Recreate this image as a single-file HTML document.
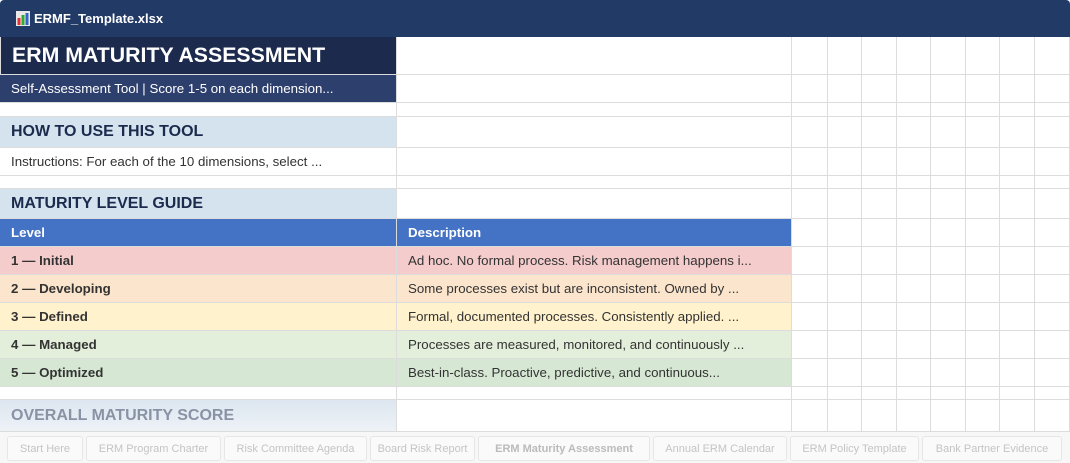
<!DOCTYPE html>
<html><head><style>
*{margin:0;padding:0;box-sizing:border-box}
body{width:1070px;height:463px;overflow:hidden;background:#fff;font-family:"Liberation Sans",Arial,sans-serif;position:relative}
.bar{position:absolute;left:0;top:0;width:1070px;height:37px;background:#223a66;border-radius:4px 4px 0 0}
.bar .t{position:absolute;left:34px;top:11px;color:#fff;font-weight:bold;font-size:13px}
.c{position:absolute;border-right:1px solid #dcdcdc;border-bottom:1px solid #dcdcdc;font-size:13.3px;color:#333;padding-left:11px;display:flex;align-items:center;white-space:nowrap;overflow:hidden}
.h{font-weight:bold;font-size:16px;color:#1c2a4d;background:#d5e3ee}
.tabs{position:absolute;left:0;top:432px;width:1070px;height:31px;background:#f7f7f7}
.tab{position:absolute;top:4px;height:25px;border:1px solid #e6e6e6;background:#fafafa;color:#c4c4c4;font-size:11px;display:flex;align-items:center;justify-content:center;border-radius:3px}
</style></head><body>
<div class="bar">
<svg style="position:absolute;left:16px;top:11px" width="14" height="15" viewBox="0 0 14 15"><rect x="0" y="0" width="14" height="15" fill="#e8e8e8"/><rect x="1.5" y="7" width="3" height="7" fill="#d33"/><rect x="5.5" y="4" width="3" height="10" fill="#3a3"/><rect x="9.5" y="2" width="3" height="12" fill="#36c"/></svg>
<div class="t">ERMF_Template.xlsx</div></div>
<div id="g"></div>
<script>
var rows=[[37,75],[75,103],[103,117],[117,148],[148,176],[176,189],[189,219],[219,247],[247,275],[275,303],[303,331],[331,359],[359,387],[387,400],[400,432]];
var cols=[792,828,862,897,931,966,1000,1035];
var h='';
rows.forEach(function(r){cols.forEach(function(x,i){var w=(i<cols.length-1?cols[i+1]:1070)-x;h+='<div class="c" style="left:'+x+'px;top:'+r[0]+'px;width:'+w+'px;height:'+(r[1]-r[0])+'px"></div>';});});
document.getElementById('g').innerHTML=h;
</script>
<div class="c" style="left:0;top:37px;width:397px;height:38px;background:#1c2a4d;color:#fff;font-weight:bold;font-size:21.3px;border-left:1px solid #dcdcdc">ERM MATURITY ASSESSMENT</div>
<div class="c" style="left:397px;top:37px;width:395px;height:38px"></div>
<div class="c" style="left:0;top:75px;width:397px;height:28px;background:#2d3f6c;color:#fff">Self-Assessment Tool | Score 1-5 on each dimension...</div>
<div class="c" style="left:397px;top:75px;width:395px;height:28px"></div>
<div class="c" style="left:0;top:103px;width:397px;height:14px"></div>
<div class="c" style="left:397px;top:103px;width:395px;height:14px"></div>
<div class="c h" style="left:0;top:117px;width:397px;height:31px">HOW TO USE THIS TOOL</div>
<div class="c" style="left:397px;top:117px;width:395px;height:31px"></div>
<div class="c" style="left:0;top:148px;width:397px;height:28px">Instructions: For each of the 10 dimensions, select ...</div>
<div class="c" style="left:397px;top:148px;width:395px;height:28px"></div>
<div class="c" style="left:0;top:176px;width:397px;height:13px"></div>
<div class="c" style="left:397px;top:176px;width:395px;height:13px"></div>
<div class="c h" style="left:0;top:189px;width:397px;height:30px">MATURITY LEVEL GUIDE</div>
<div class="c" style="left:397px;top:189px;width:395px;height:30px"></div>
<div class="c" style="left:0;top:219px;width:397px;height:28px;background:#4472c4;color:#fff;font-weight:bold">Level</div>
<div class="c" style="left:397px;top:219px;width:395px;height:28px;background:#4472c4;color:#fff;font-weight:bold">Description</div>
<div class="c" style="left:0;top:247px;width:397px;height:28px;background:#f4cccc;font-weight:bold">1 — Initial</div>
<div class="c" style="left:397px;top:247px;width:395px;height:28px;background:#f4cccc">Ad hoc. No formal process. Risk management happens i...</div>
<div class="c" style="left:0;top:275px;width:397px;height:28px;background:#fce5cd;font-weight:bold">2 — Developing</div>
<div class="c" style="left:397px;top:275px;width:395px;height:28px;background:#fce5cd">Some processes exist but are inconsistent. Owned by ...</div>
<div class="c" style="left:0;top:303px;width:397px;height:28px;background:#fff2cc;font-weight:bold">3 — Defined</div>
<div class="c" style="left:397px;top:303px;width:395px;height:28px;background:#fff2cc">Formal, documented processes. Consistently applied. ...</div>
<div class="c" style="left:0;top:331px;width:397px;height:28px;background:#e3efda;font-weight:bold">4 — Managed</div>
<div class="c" style="left:397px;top:331px;width:395px;height:28px;background:#e3efda">Processes are measured, monitored, and continuously ...</div>
<div class="c" style="left:0;top:359px;width:397px;height:28px;background:#d6e8d4;font-weight:bold">5 — Optimized</div>
<div class="c" style="left:397px;top:359px;width:395px;height:28px;background:#d6e8d4">Best-in-class. Proactive, predictive, and continuous...</div>
<div class="c" style="left:0;top:387px;width:397px;height:13px"></div>
<div class="c" style="left:397px;top:387px;width:395px;height:13px"></div>
<div class="c h" style="left:0;top:400px;width:397px;height:32px;background:linear-gradient(#dce6f0,#eef2f7);color:#8a93a6">OVERALL MATURITY SCORE</div>
<div class="c" style="left:397px;top:400px;width:395px;height:32px"></div>
<div class="tabs">
<div class="tab" style="left:7px;width:76px">Start Here</div>
<div class="tab" style="left:86px;width:135px">ERM Program Charter</div>
<div class="tab" style="left:224px;width:143px">Risk Committee Agenda</div>
<div class="tab" style="left:370px;width:105px">Board Risk Report</div>
<div class="tab" style="left:478px;width:172px;font-weight:bold;color:#bbb">ERM Maturity Assessment</div>
<div class="tab" style="left:653px;width:134px">Annual ERM Calendar</div>
<div class="tab" style="left:790px;width:129px">ERM Policy Template</div>
<div class="tab" style="left:922px;width:140px">Bank Partner Evidence</div>
</div>
</body></html>
